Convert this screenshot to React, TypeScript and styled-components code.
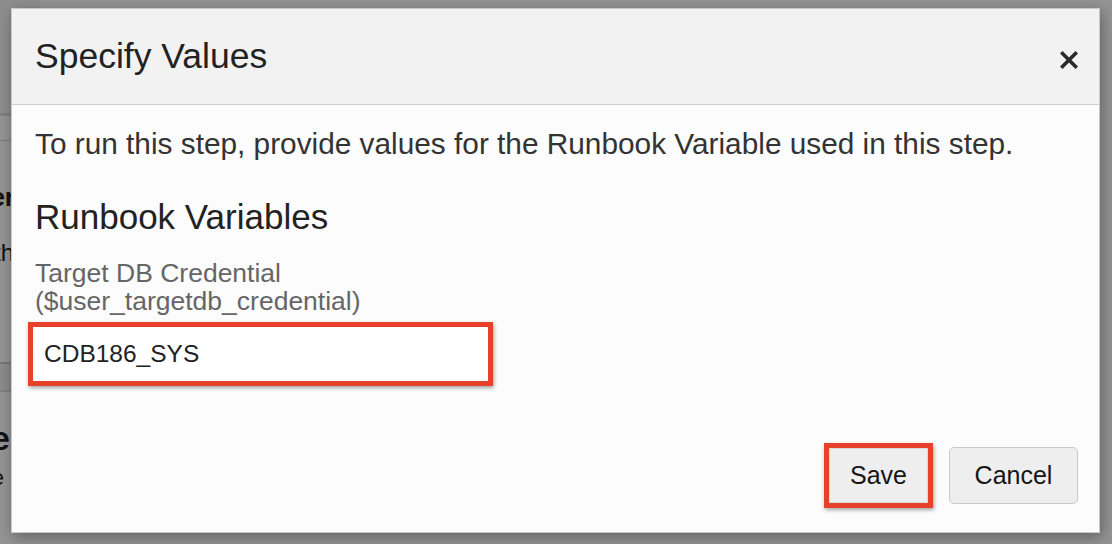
import React from "react";
import styled, { createGlobalStyle } from "styled-components";

const GlobalStyle = createGlobalStyle`
  html, body { margin: 0; padding: 0; }
  body {
    width: 1112px;
    height: 544px;
    overflow: hidden;
    font-family: "Liberation Sans", Arial, sans-serif;
    background: #ffffff;
  }
`;

const Page = styled.div`
  position: relative;
  width: 1112px;
  height: 544px;
  overflow: hidden;
  background: #ffffff;
`;

const UnderPage = styled.div`
  display: flex;
  flex-direction: column;
  width: 40px;
  color: #222;
`;

const TopBar = styled.div`
  height: 113px;
  background: #f4f4f4;
  border-bottom: 3px solid #dcdcdc;
`;

const SubBar = styled.div`
  height: 24px;
  background: #ffffff;
  border-bottom: 1px solid #d6d6d6;
`;

const Spacer = styled.div<{ $h: number }>`
  height: ${(p) => p.$h}px;
  flex: none;
`;

const Clip = styled.div<{ $size: number; $bold?: boolean; $shift: number }>`
  height: 40px;
  flex: none;
  display: flex;
  align-items: center;
  justify-content: flex-end;
  overflow: hidden;
  width: 11px;
  white-space: nowrap;
  font-size: ${(p) => p.$size}px;
  font-weight: ${(p) => (p.$bold ? 700 : 400)};
  & > span { margin-right: ${(p) => p.$shift}px; }
`;

const Separator = styled.div`
  height: 26px;
  flex: none;
  background: #f0f0f0;
  border-top: 2px solid #cfcfcf;
  border-bottom: 2px solid #dddddd;
`;

const Overlay = styled.div`
  position: absolute;
  inset: 0;
  background: rgba(0, 0, 0, 0.42);
`;

const Dialog = styled.div`
  position: absolute;
  left: 11px;
  top: 8px;
  width: 1089px;
  height: 525px;
  box-sizing: border-box;
  display: flex;
  flex-direction: column;
  background: #fcfcfc;
  border: 1px solid #c9c9c9;
  box-shadow: 2px 4px 14px rgba(0, 0, 0, 0.35);
`;

const Header = styled.div`
  height: 95px;
  flex: none;
  display: flex;
  align-items: center;
  justify-content: space-between;
  padding: 0 20px 0 23px;
  background: #f2f2f2;
  border-bottom: 1px solid #cfcfcf;
`;

const Title = styled.h1`
  margin: 0;
  font-size: 35.5px;
  font-weight: 400;
  color: #222222;
`;

const CloseButton = styled.button`
  border: 0;
  background: transparent;
  padding: 0;
  margin-top: 7px;
  width: 20px;
  height: 20px;
  display: flex;
  align-items: center;
  justify-content: center;
  cursor: pointer;
`;

const Body = styled.div`
  flex: 1;
  display: flex;
  flex-direction: column;
  padding: 22px 21px 24px 23px;
`;

const Intro = styled.p`
  margin: 0;
  font-size: 29.8px;
  line-height: 34px;
  color: #333333;
`;

const SectionTitle = styled.h2`
  margin: 36px 0 0 0;
  font-size: 35px;
  line-height: 40px;
  font-weight: 400;
  color: #222222;
`;

const Label = styled.label`
  margin-top: 22px;
  font-size: 26.5px;
  line-height: 28px;
  color: #666666;
  display: block;
`;

const Highlight = styled.div`
  border: 5px solid #e8412b;
  box-shadow: 1px 2px 4px rgba(0, 0, 0, 0.35);
  display: inline-flex;
`;

const FieldHighlight = styled(Highlight)`
  align-self: flex-start;
  margin: 7px 0 0 -7px;
`;

const Input = styled.input`
  width: 455px;
  height: 54px;
  box-sizing: border-box;
  border: 1px solid #ffffff;
  background: #ffffff;
  padding: 0 0 0 10px;
  font-family: "Liberation Sans", Arial, sans-serif;
  font-size: 24.5px;
  color: #222222;
  outline: none;
`;

const Footer = styled.div`
  margin-top: auto;
  display: flex;
  justify-content: flex-end;
  align-items: center;
  gap: 16px;
`;

const Button = styled.button<{ $w: number; $h: number; $plain?: boolean }>`
  width: ${(p) => p.$w}px;
  height: ${(p) => p.$h}px;
  box-sizing: border-box;
  border: 1px solid ${(p) => (p.$plain ? "#c9c9c9" : "#d8d8d8")};
  border-radius: ${(p) => (p.$plain ? 5 : 0)}px;
  background: #eeeeee;
  font-family: "Liberation Sans", Arial, sans-serif;
  font-size: 25px;
  color: #161616;
  padding: 0;
  cursor: pointer;
`;

export default function App() {
  return (
    <>
      <GlobalStyle />
      <Page>
        <UnderPage aria-hidden="true">
          <TopBar />
          <SubBar />
          <Spacer $h={36} />
          <Clip $size={26} $bold $shift={-4}>
            <span>Server</span>
          </Clip>
          <Spacer $h={16} />
          <Clip $size={24} $shift={-3}>
            <span>with</span>
          </Clip>
          <Spacer $h={89} />
          <Separator />
          <Spacer $h={26} />
          <Clip $size={34} $bold $shift={1}>
            <span>Tune</span>
          </Clip>
          <Clip $size={22} $shift={7}>
            <span>De</span>
          </Clip>
        </UnderPage>
        <Overlay />
        <Dialog role="dialog" aria-label="Specify Values">
          <Header>
            <Title>Specify Values</Title>
            <CloseButton aria-label="Close">
              <svg width="18" height="18" viewBox="0 0 18 18">
                <path
                  d="M2.5 2.5 L15.5 15.5 M15.5 2.5 L2.5 15.5"
                  stroke="#2b2b2b"
                  strokeWidth="3.6"
                  strokeLinecap="square"
                />
              </svg>
            </CloseButton>
          </Header>
          <Body>
            <Intro>
              To run this step, provide values for the Runbook Variable used in this step.
            </Intro>
            <SectionTitle>Runbook Variables</SectionTitle>
            <Label htmlFor="cred">
              Target DB Credential
              <br />
              ($user_targetdb_credential)
            </Label>
            <FieldHighlight>
              <Input id="cred" defaultValue="CDB186_SYS" />
            </FieldHighlight>
            <Footer>
              <Highlight>
                <Button $w={99} $h={55}>Save</Button>
              </Highlight>
              <Button $w={129} $h={57} $plain>
                Cancel
              </Button>
            </Footer>
          </Body>
        </Dialog>
      </Page>
    </>
  );
}
